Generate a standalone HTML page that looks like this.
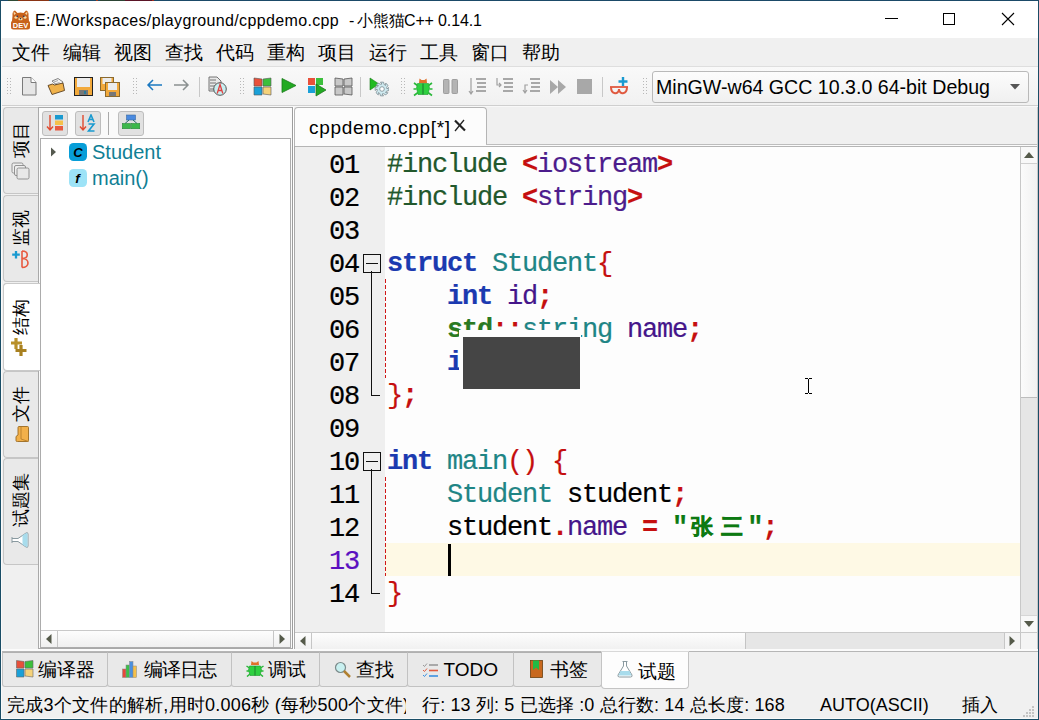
<!DOCTYPE html>
<html><head><meta charset="utf-8">
<style>
*{margin:0;padding:0;box-sizing:border-box}
html,body{width:1039px;height:720px;overflow:hidden;background:#f0f0f0;font-family:"Liberation Sans",sans-serif;color:#000}
.a{position:absolute}
.t{position:absolute;white-space:nowrap;line-height:1}
#win{position:absolute;left:0;top:0;width:1039px;height:720px;background:#f0f0f0;overflow:hidden}
.code{position:absolute;font-family:"Liberation Mono",monospace;font-size:27px;letter-spacing:-1.2px;line-height:33px;white-space:pre;-webkit-text-stroke:0.2px}
.kw{color:#1b3ab0;font-weight:bold}
.pp{color:#22582c}
.sy{color:#c50f0f;font-weight:bold}
.inc{color:#4c1c8c}
.ty{color:#1f8585}
.va{color:#45168a}
.br{color:#c50f0f}
.ns{color:#2a7a22;font-weight:bold}
.st{color:#0d7a12;font-weight:bold}
.cj{display:inline-block;width:30px;text-align:center;font-size:22px;letter-spacing:0;vertical-align:top;-webkit-text-stroke:0.6px #0d7a12}
.vt{position:absolute;transform-origin:0 0;transform:rotate(-90deg);white-space:nowrap;line-height:1;font-size:18px}
</style></head><body><div id="win">

<div class="a" style="left:0;top:0;width:1039px;height:1px;background:#1b4a68"></div>
<div class="a" style="left:8px;top:0;width:10px;height:1px;background:#2e4a34"></div>
<div class="a" style="left:18px;top:0;width:31px;height:1px;background:#8a3414"></div>
<div class="a" style="left:96px;top:0;width:2px;height:1px;background:#a03a1a"></div>
<div class="a" style="left:100px;top:0;width:25px;height:1px;background:#2c4434"></div>
<div class="a" style="left:125px;top:0;width:27px;height:1px;background:#5a1426"></div>
<div class="a" style="left:152px;top:0;width:2px;height:1px;background:#a02a1a"></div>
<div class="a" style="left:0;top:0;width:1px;height:720px;background:#1a4d66"></div>
<div class="a" style="left:1038px;top:0;width:1px;height:720px;background:#1a4d66"></div>
<div class="a" style="left:0;top:719px;width:1039px;height:1px;background:#1a4d66"></div>
<div class="a" style="left:1px;top:1px;width:1037px;height:37px;background:#fff"></div>
<svg class="a" style="left:10px;top:9px" width="21" height="21" viewBox="0 0 21 21">
<path d="M2.5 7 Q2 2 5 1.5 L7.5 4 Q10.5 2.8 13.5 4 L16 1.5 Q19 2 18.5 7 L19 12 H2 Z" fill="#c8621a"/>
<path d="M3.5 2.5 L6 4.5 L4 6 Z M17.5 2.5 L15 4.5 L17 6Z" fill="#f3d7a8"/>
<ellipse cx="6" cy="8.5" rx="1.6" ry="1.3" fill="#f5dca8"/><ellipse cx="15" cy="8.5" rx="1.6" ry="1.3" fill="#f5dca8"/>
<circle cx="7.3" cy="7.3" r="0.9" fill="#3a3a5a"/><circle cx="13.7" cy="7.3" r="0.9" fill="#3a3a5a"/>
<ellipse cx="10.5" cy="10" rx="2.2" ry="1.5" fill="#f5dca8"/><circle cx="10.5" cy="9.6" r="0.8" fill="#333"/>
<rect x="1" y="11.5" width="19" height="9" rx="2.5" fill="#c8621a"/>
<text x="10.5" y="19" font-family="Liberation Sans" font-weight="bold" font-size="7.5" fill="#fff" text-anchor="middle">DEV</text>
</svg>
<div class="t" style="left:35px;top:13px;font-size:16px;letter-spacing:0.35px">E:/Workspaces/playground/cppdemo.cpp</div>
<div class="t" style="left:349px;top:13px;font-size:16px">-</div>
<div class="t" style="left:357px;top:13px;font-size:16px">小熊猫</div>
<div class="t" style="left:404px;top:13px;font-size:16px;letter-spacing:-0.15px">C++ 0.14.1</div>
<div class="a" style="left:885px;top:18px;width:13px;height:1px;background:#000"></div>
<div class="a" style="left:943px;top:13px;width:12px;height:12px;border:1px solid #000"></div>
<svg class="a" style="left:1001px;top:12px" width="14" height="14" viewBox="0 0 14 14"><path d="M1 1 L13 13 M13 1 L1 13" stroke="#000" stroke-width="1.1"/></svg>
<div class="a" style="left:1px;top:38px;width:1037px;height:28px;background:#f0f0f0"></div>
<div class="t" style="left:11.5px;top:42.5px;font-size:19px">文件</div>
<div class="t" style="left:62.5px;top:42.5px;font-size:19px">编辑</div>
<div class="t" style="left:113.5px;top:42.5px;font-size:19px">视图</div>
<div class="t" style="left:164.5px;top:42.5px;font-size:19px">查找</div>
<div class="t" style="left:215.5px;top:42.5px;font-size:19px">代码</div>
<div class="t" style="left:266.5px;top:42.5px;font-size:19px">重构</div>
<div class="t" style="left:317.5px;top:42.5px;font-size:19px">项目</div>
<div class="t" style="left:368.5px;top:42.5px;font-size:19px">运行</div>
<div class="t" style="left:419.5px;top:42.5px;font-size:19px">工具</div>
<div class="t" style="left:470.5px;top:42.5px;font-size:19px">窗口</div>
<div class="t" style="left:521.5px;top:42.5px;font-size:19px">帮助</div>
<div class="a" style="left:1px;top:66px;width:1037px;height:1px;background:#dedede"></div>
<div class="a" style="left:1px;top:67px;width:1037px;height:38px;background:linear-gradient(#f9f9f9,#f1f1f1)"></div>
<div class="a" style="left:1px;top:105px;width:1037px;height:1px;background:#cfcfcf"></div>
<div class="a" style="left:7px;top:78px;width:1px;height:1px;background:#b8b8b8"></div><div class="a" style="left:10px;top:78px;width:1px;height:1px;background:#b8b8b8"></div><div class="a" style="left:7px;top:81px;width:1px;height:1px;background:#b8b8b8"></div><div class="a" style="left:10px;top:81px;width:1px;height:1px;background:#b8b8b8"></div><div class="a" style="left:7px;top:84px;width:1px;height:1px;background:#b8b8b8"></div><div class="a" style="left:10px;top:84px;width:1px;height:1px;background:#b8b8b8"></div><div class="a" style="left:7px;top:87px;width:1px;height:1px;background:#b8b8b8"></div><div class="a" style="left:10px;top:87px;width:1px;height:1px;background:#b8b8b8"></div><div class="a" style="left:7px;top:90px;width:1px;height:1px;background:#b8b8b8"></div><div class="a" style="left:10px;top:90px;width:1px;height:1px;background:#b8b8b8"></div><div class="a" style="left:7px;top:93px;width:1px;height:1px;background:#b8b8b8"></div><div class="a" style="left:10px;top:93px;width:1px;height:1px;background:#b8b8b8"></div>
<div class="a" style="left:133px;top:78px;width:1px;height:1px;background:#b8b8b8"></div><div class="a" style="left:136px;top:78px;width:1px;height:1px;background:#b8b8b8"></div><div class="a" style="left:133px;top:81px;width:1px;height:1px;background:#b8b8b8"></div><div class="a" style="left:136px;top:81px;width:1px;height:1px;background:#b8b8b8"></div><div class="a" style="left:133px;top:84px;width:1px;height:1px;background:#b8b8b8"></div><div class="a" style="left:136px;top:84px;width:1px;height:1px;background:#b8b8b8"></div><div class="a" style="left:133px;top:87px;width:1px;height:1px;background:#b8b8b8"></div><div class="a" style="left:136px;top:87px;width:1px;height:1px;background:#b8b8b8"></div><div class="a" style="left:133px;top:90px;width:1px;height:1px;background:#b8b8b8"></div><div class="a" style="left:136px;top:90px;width:1px;height:1px;background:#b8b8b8"></div><div class="a" style="left:133px;top:93px;width:1px;height:1px;background:#b8b8b8"></div><div class="a" style="left:136px;top:93px;width:1px;height:1px;background:#b8b8b8"></div>
<div class="a" style="left:240px;top:78px;width:1px;height:1px;background:#b8b8b8"></div><div class="a" style="left:243px;top:78px;width:1px;height:1px;background:#b8b8b8"></div><div class="a" style="left:240px;top:81px;width:1px;height:1px;background:#b8b8b8"></div><div class="a" style="left:243px;top:81px;width:1px;height:1px;background:#b8b8b8"></div><div class="a" style="left:240px;top:84px;width:1px;height:1px;background:#b8b8b8"></div><div class="a" style="left:243px;top:84px;width:1px;height:1px;background:#b8b8b8"></div><div class="a" style="left:240px;top:87px;width:1px;height:1px;background:#b8b8b8"></div><div class="a" style="left:243px;top:87px;width:1px;height:1px;background:#b8b8b8"></div><div class="a" style="left:240px;top:90px;width:1px;height:1px;background:#b8b8b8"></div><div class="a" style="left:243px;top:90px;width:1px;height:1px;background:#b8b8b8"></div><div class="a" style="left:240px;top:93px;width:1px;height:1px;background:#b8b8b8"></div><div class="a" style="left:243px;top:93px;width:1px;height:1px;background:#b8b8b8"></div>
<div class="a" style="left:401px;top:78px;width:1px;height:1px;background:#b8b8b8"></div><div class="a" style="left:404px;top:78px;width:1px;height:1px;background:#b8b8b8"></div><div class="a" style="left:401px;top:81px;width:1px;height:1px;background:#b8b8b8"></div><div class="a" style="left:404px;top:81px;width:1px;height:1px;background:#b8b8b8"></div><div class="a" style="left:401px;top:84px;width:1px;height:1px;background:#b8b8b8"></div><div class="a" style="left:404px;top:84px;width:1px;height:1px;background:#b8b8b8"></div><div class="a" style="left:401px;top:87px;width:1px;height:1px;background:#b8b8b8"></div><div class="a" style="left:404px;top:87px;width:1px;height:1px;background:#b8b8b8"></div><div class="a" style="left:401px;top:90px;width:1px;height:1px;background:#b8b8b8"></div><div class="a" style="left:404px;top:90px;width:1px;height:1px;background:#b8b8b8"></div><div class="a" style="left:401px;top:93px;width:1px;height:1px;background:#b8b8b8"></div><div class="a" style="left:404px;top:93px;width:1px;height:1px;background:#b8b8b8"></div>
<div class="a" style="left:643px;top:78px;width:1px;height:1px;background:#b8b8b8"></div><div class="a" style="left:646px;top:78px;width:1px;height:1px;background:#b8b8b8"></div><div class="a" style="left:643px;top:81px;width:1px;height:1px;background:#b8b8b8"></div><div class="a" style="left:646px;top:81px;width:1px;height:1px;background:#b8b8b8"></div><div class="a" style="left:643px;top:84px;width:1px;height:1px;background:#b8b8b8"></div><div class="a" style="left:646px;top:84px;width:1px;height:1px;background:#b8b8b8"></div><div class="a" style="left:643px;top:87px;width:1px;height:1px;background:#b8b8b8"></div><div class="a" style="left:646px;top:87px;width:1px;height:1px;background:#b8b8b8"></div><div class="a" style="left:643px;top:90px;width:1px;height:1px;background:#b8b8b8"></div><div class="a" style="left:646px;top:90px;width:1px;height:1px;background:#b8b8b8"></div><div class="a" style="left:643px;top:93px;width:1px;height:1px;background:#b8b8b8"></div><div class="a" style="left:646px;top:93px;width:1px;height:1px;background:#b8b8b8"></div>
<div class="a" style="left:199px;top:77px;width:1px;height:20px;background:#c8c8c8"></div>
<div class="a" style="left:360px;top:77px;width:1px;height:20px;background:#c8c8c8"></div>
<div class="a" style="left:602px;top:77px;width:1px;height:20px;background:#c8c8c8"></div>
<svg class="a" style="left:21px;top:77px" width="20" height="20" viewBox="0 0 20 20"><path d="M1.5 0.5 H10 L15 5.5 V18 H1.5 Z" fill="#e6e6e6" stroke="#7a7a7a"/><path d="M10 0.5 V5.5 H15" fill="#fff" stroke="#7a7a7a"/></svg>
<svg class="a" style="left:47px;top:77px" width="20" height="20" viewBox="0 0 20 20"><path d="M5 4 L11 1.5 L16 5 L13 11 Z" fill="#f4f4f4" stroke="#666" stroke-width="0.8"/><path d="M7 5 L11 3.5 M8 7 L12.5 5.5" stroke="#888" stroke-width="0.7"/><path d="M1 8.5 L5.5 7 L7.5 8 L16 6 L17.5 13.5 L5 17.5 Z" fill="#f0b24a" stroke="#5a4020" stroke-width="0.9"/></svg>
<svg class="a" style="left:74px;top:77px" width="20" height="20" viewBox="0 0 20 20"><rect x="0.5" y="0.5" width="18" height="18" fill="#f2a93b" stroke="#222"/><rect x="3" y="1" width="13" height="9" fill="#ececec"/><rect x="5" y="13" width="9" height="5" fill="#777"/><rect x="10" y="14" width="2" height="3" fill="#2a7a9a"/></svg>
<svg class="a" style="left:100px;top:77px" width="20" height="20" viewBox="0 0 20 20"><rect x="0.5" y="0.5" width="13" height="13" fill="#f2a93b" stroke="#8a6a30"/><rect x="2.5" y="1" width="9" height="6" fill="#ececec"/><rect x="5.5" y="5.5" width="14" height="14" fill="#f2a93b" stroke="#8a6a30"/><rect x="8" y="6" width="9" height="7" fill="#ececec"/><rect x="9" y="15" width="7" height="4" fill="#777"/></svg>
<svg class="a" style="left:146px;top:75px" width="20" height="20" viewBox="0 0 20 20"><path d="M2 10 H16 M7 5 L2 10 L7 15" fill="none" stroke="#1a78c0" stroke-width="1.5"/></svg>
<svg class="a" style="left:173px;top:75px" width="20" height="20" viewBox="0 0 20 20"><path d="M1 10 H15 M10 5 L15 10 L10 15" fill="none" stroke="#8a9090" stroke-width="1.5"/></svg>
<svg class="a" style="left:207px;top:76px" width="20" height="20" viewBox="0 0 20 20"><path d="M2 1 H10 L14 5 V15 H2 Z" fill="#e8e8e8" stroke="#666" stroke-width="0.9"/><path d="M3 4H9M3 7H9M3 10H8M3 13H8" stroke="#666" stroke-width="0.9"/><circle cx="13" cy="13" r="6.3" fill="#c8eef0" stroke="#555" stroke-width="1"/><path d="M10.2 17.5 L13 8.5 L15.8 17.5 M11 14.5 H15" fill="none" stroke="#e04040" stroke-width="1.3"/></svg>
<svg class="a" style="left:253px;top:77px" width="20" height="20" viewBox="0 0 20 20"><path d="M1 1 L9 2 L9 9 L1 9 Z" fill="#e8503a" stroke="#555" stroke-width="0.6"/><path d="M10 2 L18 1 L18 9 L10 9 Z" fill="#3cbf3c" stroke="#555" stroke-width="0.6"/><path d="M1 10 L9 10 L9 18 L1 18 Z" fill="#1aa0d8" stroke="#555" stroke-width="0.6"/><path d="M10 10 L18 10 L18 18 L10 17 Z" fill="#f5d27a" stroke="#555" stroke-width="0.6"/></svg>
<svg class="a" style="left:280px;top:77px" width="20" height="20" viewBox="0 0 20 20"><path d="M2 1.5 L16 8.5 L2 15.5 Z" fill="#22aa22" stroke="#1a7a1a" stroke-width="0.8"/></svg>
<svg class="a" style="left:307px;top:77px" width="20" height="20" viewBox="0 0 20 20"><path d="M1 1 L8 1 L8 8 L1 8 Z" fill="#e8503a"/><path d="M9 1 L16 1 L16 8 L9 8 Z" fill="#3cbf3c"/><path d="M1 9 L8 9 L8 16 L1 16 Z" fill="#1aa0d8"/><path d="M9 9 L12 9 L12 16 L9 16Z" fill="#f5d27a"/><path d="M9 7 L19 13 L9 19 Z" fill="#22aa22" stroke="#1a6a1a" stroke-width="0.7"/></svg>
<svg class="a" style="left:334px;top:77px" width="20" height="20" viewBox="0 0 20 20"><path d="M1 1 L9 2 L9 9 L1 9 Z M10 2 L18 1 L18 9 L10 9 Z M1 10 L9 10 L9 18 L1 18 Z M10 10 L18 10 L18 18 L10 17 Z" fill="#c8c8c8" stroke="#555" stroke-width="0.8"/></svg>
<svg class="a" style="left:369px;top:77px" width="20" height="20" viewBox="0 0 20 20"><path d="M1 1 L10 7 L1 13 Z" fill="#22bb22" stroke="#1a7a1a" stroke-width="0.6"/><path d="M19.83 10.47 L19.83 13.53 L17.50 14.17 L16.55 15.52 L18.91 15.75 L16.75 17.91 L14.65 16.72 L13.03 17.00 L14.53 18.83 L11.47 18.83 L10.83 16.50 L9.48 15.55 L9.25 17.91 L7.09 15.75 L8.28 13.65 L8.00 12.03 L6.17 13.53 L6.17 10.47 L8.50 9.83 L9.45 8.48 L7.09 8.25 L9.25 6.09 L11.35 7.28 L12.97 7.00 L11.47 5.17 L14.53 5.17 L15.17 7.50 L16.52 8.45 L16.75 6.09 L18.91 8.25 L17.72 10.35 L18.00 11.97Z" fill="#cfeaf0" stroke="#7a8a90" stroke-width="0.8"/><circle cx="13" cy="12" r="2.3" fill="#fff" stroke="#7a8a90" stroke-width="0.8"/></svg>
<svg class="a" style="left:413px;top:77px" width="20" height="20" viewBox="0 0 20 20"><path d="M6 6 L6.5 1.5 L8.5 3 H11.5 L13.5 1.5 L14 6 Z" fill="#e0702a"/><path d="M4.5 6.5 H15.5 L16.5 11 L15 17.5 H5 L3.5 11 Z" fill="#2ed040" stroke="#1a9a2a" stroke-width="0.6"/><path d="M10 6.5 V17.5" stroke="#1a6a2a" stroke-width="0.9"/><path d="M1 6 L4.5 8.5 M19 6 L15.5 8.5 M0.5 12 H3.5 M19.5 12 H16.5 M1 18.5 L5 15.5 M19 18.5 L15 15.5" stroke="#2ab83a" stroke-width="1.6"/></svg>
<svg class="a" style="left:442px;top:77px" width="20" height="20" viewBox="0 0 20 20"><rect x="1.5" y="2.5" width="5.5" height="14" rx="0.8" fill="#b4b4b4" stroke="#989898" stroke-width="0.9"/><rect x="10" y="2.5" width="5.5" height="14" rx="0.8" fill="#b4b4b4" stroke="#989898" stroke-width="0.9"/></svg>
<svg class="a" style="left:468px;top:77px" width="20" height="20" viewBox="0 0 20 20"><path d="M8 2 H18 M9 6 H18 M9 10 H18 M8 14 H18" stroke="#a8a8a8" stroke-width="1.8"/><path d="M3 1 V17 M1 14 L3 17 L5 14" stroke="#a0a0a0" stroke-width="1.2" fill="none"/></svg>
<svg class="a" style="left:495px;top:77px" width="20" height="20" viewBox="0 0 20 20"><path d="M8 2 H18 M9 6 H18 M9 10 H18 M8 14 H18" stroke="#a8a8a8" stroke-width="1.8"/><path d="M2 1 V8 H6 M4 6 L6 8 L4 10" stroke="#a0a0a0" stroke-width="1.2" fill="none"/></svg>
<svg class="a" style="left:522px;top:77px" width="20" height="20" viewBox="0 0 20 20"><path d="M8 2 H18 M9 6 H18 M9 10 H18 M8 14 H18" stroke="#a8a8a8" stroke-width="1.8"/><path d="M6 8 H3 V16 M1 13 L3 16 L5 13" stroke="#a0a0a0" stroke-width="1.2" fill="none"/></svg>
<svg class="a" style="left:549px;top:77px" width="20" height="20" viewBox="0 0 20 20"><path d="M1 3 L9 10 L1 17 Z M9 3 L17 10 L9 17 Z" fill="#a8a8a8"/></svg>
<svg class="a" style="left:577px;top:79px" width="20" height="20" viewBox="0 0 20 20"><rect x="0" y="0" width="15" height="15" fill="#a8a8a8"/></svg>
<svg class="a" style="left:609px;top:76px" width="21" height="21" viewBox="0 0 21 21"><path d="M14 1 V10 M9.5 5.5 H18.5" stroke="#1a9ad0" stroke-width="2.4"/><path d="M1 11 H19" stroke="#e05a40" stroke-width="1.8"/><path d="M2 11 C2 19 10 19 10 13 C10 19 18 19 18 11" fill="none" stroke="#e05a40" stroke-width="2"/></svg>
<div class="a" style="left:652px;top:71px;width:377px;height:32px;border:1px solid #b9b9b9;border-radius:3px;background:linear-gradient(#fcfcfc,#f0f0f0)"></div>
<div class="t" style="left:656px;top:78px;font-size:19.6px">MinGW-w64 GCC 10.3.0 64-bit Debug</div>
<svg class="a" style="left:1010px;top:84px" width="10" height="6" viewBox="0 0 10 6"><path d="M0 0 H10 L5 5.5 Z" fill="#555"/></svg>
<div class="a" style="left:1px;top:106px;width:1037px;height:1px;background:#f8f8f8"></div>
<div class="a" style="left:3px;top:107px;width:36px;height:87px;background:#e9e9e9;border:1px solid #c6c6c6;border-right:none;border-radius:4px 0 0 4px"></div>
<div class="a" style="left:3px;top:195px;width:36px;height:87px;background:#e9e9e9;border:1px solid #c6c6c6;border-right:none;border-radius:4px 0 0 4px"></div>
<div class="a" style="left:3px;top:283px;width:37px;height:88px;background:#fff;border:1px solid #c9c9c9;border-right:none;border-radius:4px 0 0 4px"></div>
<div class="a" style="left:3px;top:371px;width:36px;height:87px;background:#e9e9e9;border:1px solid #c6c6c6;border-right:none;border-radius:4px 0 0 4px"></div>
<div class="a" style="left:3px;top:458px;width:36px;height:107px;background:#e9e9e9;border:1px solid #c6c6c6;border-right:none;border-radius:4px 0 0 4px"></div>
<div class="vt" style="left:12px;top:158px">项目</div>
<div class="vt" style="left:12px;top:245.5px">监视</div>
<div class="vt" style="left:12px;top:334.5px">结构</div>
<div class="vt" style="left:12px;top:422px">文件</div>
<div class="vt" style="left:12px;top:527px">试题集</div>
<svg class="a" style="left:11px;top:162px" width="19" height="19" viewBox="0 0 19 19"><rect x="1" y="1" width="11" height="10" rx="1.5" fill="#eee" stroke="#888" stroke-width="0.9"/><rect x="3.5" y="3.5" width="11" height="10" rx="1.5" fill="#eee" stroke="#888" stroke-width="0.9"/><rect x="6" y="6" width="12" height="11" rx="1.5" fill="#e8e8e8" stroke="#888" stroke-width="0.9"/></svg>
<svg class="a" style="left:11px;top:250px" width="19" height="20" viewBox="0 0 19 20"><path d="M5 1 V8.5 M1.2 4.7 H8.8" stroke="#1a9ad0" stroke-width="2.3"/><path d="M11 1 V17.5 M11 1 C18 1 18 8.5 11 8.5 C19 8.5 19 17.5 11 17.5" fill="none" stroke="#e85a40" stroke-width="1.6"/></svg>
<svg class="a" style="left:11px;top:337px" width="17" height="20" viewBox="0 0 17 20"><path d="M5 1 V12 M0 6 H11" stroke="#b8902a" stroke-width="3.2"/><path d="M10 8 V19 M4.5 13.5 H15.5" stroke="#a88020" stroke-width="3.2"/></svg>
<svg class="a" style="left:13px;top:425px" width="18" height="18" viewBox="0 0 18 18"><g transform="rotate(-90 9 9)"><path d="M1.5 4.5 L1.5 14.5 Q1.5 15.5 2.5 15.5 L15.5 15.5 Q16.5 15.5 16.5 14.5 L16.5 6 Q16.5 5 15.5 5 L8 5 L6.5 3 L2.5 3 Q1.5 3 1.5 4 Z" fill="#f2b04a" stroke="#9a6a20" stroke-width="0.9"/><path d="M1.5 15.5 L4 8 L16.5 8" fill="none" stroke="#b07a28" stroke-width="0.8"/></g></svg>
<svg class="a" style="left:11px;top:531px" width="18" height="18" viewBox="0 0 18 18"><g transform="rotate(-90 9 9)"><path d="M6 1 H12 M7.5 1 V7 L2 15 Q1 17 3 17 H15 Q17 17 16 15 L10.5 7 V1" fill="#fff" stroke="#8a9aa0" stroke-width="1"/><path d="M4.2 11.5 L13.8 11.5 L16 15.5 Q16.5 16.5 15 16.5 H3 Q1.5 16.5 2 15.5 Z" fill="#a8dcec"/></g></svg>
<div class="a" style="left:38px;top:107px;width:255px;height:542px;background:#fafafa;border:1px solid #a9a9a9;border-right:1px solid #9d9d9d"></div>
<div class="a" style="left:3px;top:283px;width:37px;height:88px;background:#fff;border:1px solid #c9c9c9;border-right:none;border-radius:4px 0 0 4px"></div>
<div class="vt" style="left:12px;top:334.5px">结构</div>
<svg class="a" style="left:11px;top:337px" width="17" height="20" viewBox="0 0 17 20"><path d="M5 1 V12 M0 6 H11" stroke="#b8902a" stroke-width="3.2"/><path d="M10 8 V19 M4.5 13.5 H15.5" stroke="#a88020" stroke-width="3.2"/></svg>
<div class="a" style="left:42px;top:111px;width:26px;height:25px;background:#e1e1e1;border:1px solid #bdbdbd;border-radius:3px"></div>
<div class="a" style="left:75px;top:111px;width:26px;height:25px;background:#e1e1e1;border:1px solid #bdbdbd;border-radius:3px"></div>
<div class="a" style="left:118px;top:111px;width:26px;height:25px;background:#e1e1e1;border:1px solid #bdbdbd;border-radius:3px"></div>
<div class="a" style="left:108px;top:112px;width:1px;height:23px;background:#aaa"></div>
<svg class="a" style="left:46px;top:114px" width="18" height="18" viewBox="0 0 18 18"><path d="M4 1 V16 M1 12.5 L4 16 L7 12.5" stroke="#e04a30" stroke-width="1.4" fill="none"/><rect x="9" y="1" width="8" height="4.5" fill="#1a9ad0"/><rect x="9" y="6.5" width="8" height="4.5" fill="#f5c04a"/><rect x="9" y="12" width="8" height="4.5" fill="#e85a40"/></svg>
<svg class="a" style="left:79px;top:114px" width="18" height="18" viewBox="0 0 18 18"><path d="M4 1 V16 M1 12.5 L4 16 L7 12.5" stroke="#e04a30" stroke-width="1.4" fill="none"/><path d="M9 8 L12 1 L15 8 M10 5.5 H14 M9.5 10 H15 L9.5 17 H15.5" stroke="#1a9ad0" stroke-width="1.6" fill="none"/></svg>
<svg class="a" style="left:122px;top:114px" width="18" height="18" viewBox="0 0 18 18"><rect x="4.5" y="1" width="9" height="5" fill="#4a8ae0" stroke="#3a6aa0" stroke-width="0.6"/><path d="M7 6 L3 9.5 M11 6 L15 9.5" stroke="#2a6a6a" stroke-width="1"/><rect x="0.3" y="9.5" width="8.2" height="5.2" fill="#3cb84a" stroke="#2a8a3a" stroke-width="0.6"/><rect x="9.5" y="9.5" width="8.2" height="5.2" fill="#3cb84a" stroke="#2a8a3a" stroke-width="0.6"/></svg>
<div class="a" style="left:40px;top:138px;width:251px;height:510px;background:#fff;border:1px solid #acacac"></div>
<svg class="a" style="left:50px;top:147px" width="8" height="11" viewBox="0 0 8 11"><path d="M1 0.5 L6 5 L1 9.5 Z" fill="#555a50"/></svg>
<svg class="a" style="left:69px;top:143px" width="18" height="18" viewBox="0 0 18 18"><rect x="0" y="0" width="18" height="18" rx="4.5" fill="#079ed8"/><text x="9" y="13.5" font-family="Liberation Sans" font-weight="bold" font-style="italic" font-size="13" text-anchor="middle" fill="#000">C</text></svg>
<svg class="a" style="left:69px;top:169px" width="18" height="18" viewBox="0 0 18 18"><rect x="0" y="0" width="18" height="18" rx="4.5" fill="#9de3f7"/><text x="8.5" y="14" font-family="Liberation Sans" font-weight="bold" font-style="italic" font-size="13.5" text-anchor="middle" fill="#000">f</text></svg>
<div class="t" style="left:92px;top:142px;font-size:20px;color:#117f95">Student</div>
<div class="t" style="left:92px;top:168px;font-size:20px;color:#117f95">main()</div>
<div class="a" style="left:41px;top:630px;width:249px;height:1px;background:#c9c9c9"></div>
<div class="a" style="left:41px;top:631px;width:249px;height:16px;background:linear-gradient(#fdfdfd,#f0f0f0)"></div>
<div class="a" style="left:57px;top:631px;width:1px;height:16px;background:#c6c6c6"></div>
<div class="a" style="left:273px;top:631px;width:1px;height:16px;background:#c6c6c6"></div>
<svg class="a" style="left:46px;top:634px" width="6" height="10" viewBox="0 0 6 10"><path d="M5.5 0 V10 L0 5 Z" fill="#555a4a"/></svg>
<svg class="a" style="left:279px;top:634px" width="6" height="10" viewBox="0 0 6 10"><path d="M0.5 0 V10 L6 5 Z" fill="#555a4a"/></svg>
<div class="a" style="left:294px;top:107px;width:193px;height:40px;background:#fcfcfc;border:1px solid #b5b5b5;border-bottom:none;border-radius:4px 4px 0 0"></div>
<div class="t" style="left:309px;top:118px;font-size:19px;letter-spacing:0.7px">cppdemo.cpp[*]</div>
<svg class="a" style="left:453px;top:119px" width="14" height="13" viewBox="0 0 14 13"><path d="M2 1.5 L12 11.5" stroke="#222" stroke-width="2.2"/><path d="M11 1 L2 12" stroke="#222" stroke-width="1.3"/></svg>
<div class="a" style="left:486px;top:144px;width:551px;height:1px;background:#bdbdbd"></div>
<div class="a" style="left:486px;top:145px;width:551px;height:1px;background:#fbfbfb"></div>
<div class="a" style="left:294px;top:146px;width:743px;height:1px;background:#b5b5b5"></div>
<div class="a" style="left:294px;top:146px;width:1px;height:503px;background:#a9a9a9"></div>
<div class="a" style="left:295px;top:147px;width:90px;height:485px;background:#efefef"></div>
<div class="a" style="left:385px;top:147px;width:635px;height:485px;background:#fdfdfd"></div>
<div class="a" style="left:385px;top:543px;width:635px;height:33px;background:#fef9e5"></div>
<div class="code" style="left:387px;top:149px"><span class="pp">#include </span><span class="sy">&lt;</span><span class="inc">iostream</span><span class="sy">&gt;</span>
<span class="pp">#include </span><span class="sy">&lt;</span><span class="inc">string</span><span class="sy">&gt;</span>

<span class="kw">struct</span> <span class="ty">Student</span><span class="br">{</span>
    <span class="kw">int</span> <span class="va">id</span><span class="sy">;</span>
    <span class="ns">std</span><span class="sy">::</span><span class="ty">string</span> <span class="va">name</span><span class="sy">;</span>
    <span class="kw">int</span> <span class="va">age</span><span class="sy">;</span>
<span class="br">}</span><span class="sy">;</span>

<span class="kw">int</span> <span class="ty">main</span><span class="br">()</span> <span class="br">{</span>
    <span class="ty">Student</span> student<span class="sy">;</span>
    student<span class="sy">.</span><span class="va">name</span> <span class="sy">=</span> <span class="st">"<span class="cj">张</span><span class="cj">三</span>"</span><span class="sy">;</span>

<span class="br">}</span></div>
<div class="code" style="left:329px;top:150px"><div style="height:33px;">01</div><div style="height:33px;">02</div><div style="height:33px;">03</div><div style="height:33px;">04</div><div style="height:33px;">05</div><div style="height:33px;">06</div><div style="height:33px;">07</div><div style="height:33px;">08</div><div style="height:33px;">09</div><div style="height:33px;">10</div><div style="height:33px;">11</div><div style="height:33px;">12</div><div style="height:33px;color:#5a10c0">13</div><div style="height:33px;">14</div></div>
<div class="a" style="left:363px;top:254px;width:18px;height:19px;border:1px solid #111;background:#efefef"></div>
<div class="a" style="left:366px;top:263px;width:12px;height:1px;background:#111"></div>
<div class="a" style="left:363px;top:452px;width:18px;height:19px;border:1px solid #111;background:#efefef"></div>
<div class="a" style="left:366px;top:461px;width:12px;height:1px;background:#111"></div>
<div class="a" style="left:371px;top:271px;width:1px;height:124px;background:#111"></div>
<div class="a" style="left:371px;top:395px;width:9px;height:1px;background:#111"></div>
<div class="a" style="left:371px;top:469px;width:1px;height:124px;background:#111"></div>
<div class="a" style="left:371px;top:593px;width:9px;height:1px;background:#111"></div>
<div class="a" style="left:385px;top:279px;width:1px;height:99px;background:repeating-linear-gradient(#d01818 0 4px,transparent 4px 6px)"></div>
<div class="a" style="left:385px;top:477px;width:1px;height:99px;background:repeating-linear-gradient(#d01818 0 4px,transparent 4px 6px)"></div>
<div class="a" style="left:448px;top:544px;width:3px;height:32px;background:#000"></div>
<div class="a" style="left:459px;top:330px;width:122px;height:7px;background:#fdfdfd"></div>
<div class="a" style="left:459px;top:337px;width:4px;height:52px;background:#fdfdfd"></div>
<div class="a" style="left:463px;top:337px;width:117px;height:52px;background:#454545"></div>
<div class="a" style="left:805px;top:378px;width:3px;height:1px;background:#000"></div><div class="a" style="left:809px;top:378px;width:3px;height:1px;background:#000"></div><div class="a" style="left:808px;top:379px;width:1px;height:14px;background:#000"></div><div class="a" style="left:805px;top:393px;width:3px;height:1px;background:#000"></div><div class="a" style="left:809px;top:393px;width:3px;height:1px;background:#000"></div>
<div class="a" style="left:1020px;top:147px;width:17px;height:485px;background:#e6e6e6;border-left:1px solid #c8c8c8"></div>
<div class="a" style="left:1021px;top:164px;width:16px;height:234px;background:linear-gradient(90deg,#fbfbfb,#f1f1f1);border-bottom:1px solid #bdbdbd"></div>
<div class="a" style="left:1021px;top:147px;width:16px;height:17px;background:#f8f8f8;border-bottom:1px solid #d0d0d0"></div>
<div class="a" style="left:1021px;top:615px;width:16px;height:17px;background:#f8f8f8;border-top:1px solid #d6d6d6"></div>
<svg class="a" style="left:1024px;top:152px" width="10" height="6" viewBox="0 0 10 6"><path d="M0 6 H10 L5 0 Z" fill="#555a4a"/></svg>
<svg class="a" style="left:1024px;top:621px" width="10" height="6" viewBox="0 0 10 6"><path d="M0 0 H10 L5 6 Z" fill="#555a4a"/></svg>
<div class="a" style="left:1037px;top:107px;width:1px;height:544px;background:#c8c8c8"></div>
<div class="a" style="left:295px;top:632px;width:742px;height:1px;background:#c9c9c9"></div>
<div class="a" style="left:295px;top:633px;width:742px;height:16px;background:#e6e6e6"></div>
<div class="a" style="left:295px;top:633px;width:450px;height:16px;background:linear-gradient(#fdfdfd,#f1f1f1)"></div>
<div class="a" style="left:311px;top:633px;width:1px;height:16px;background:#c6c6c6"></div>
<div class="a" style="left:745px;top:633px;width:1px;height:16px;background:#c4c4c4"></div>
<div class="a" style="left:1004px;top:633px;width:33px;height:16px;background:#f4f4f4"></div>
<div class="a" style="left:1004px;top:633px;width:1px;height:16px;background:#c6c6c6"></div>
<div class="a" style="left:1020px;top:633px;width:1px;height:16px;background:#c6c6c6"></div>
<svg class="a" style="left:300px;top:636px" width="6" height="10" viewBox="0 0 6 10"><path d="M5.5 0 V10 L0 5 Z" fill="#555a4a"/></svg>
<svg class="a" style="left:1009px;top:636px" width="6" height="10" viewBox="0 0 6 10"><path d="M0.5 0 V10 L6 5 Z" fill="#555a4a"/></svg>
<div class="a" style="left:293px;top:107px;width:1px;height:542px;background:#fff"></div>
<div class="a" style="left:1px;top:649px;width:1037px;height:2px;background:#fbfbfb"></div>
<div class="a" style="left:1px;top:651px;width:1037px;height:1px;background:#b6b6b6"></div>
<div class="a" style="left:2px;top:652px;width:106px;height:35px;background:#e9e9e9;border:1px solid #c2c2c2;border-top:1px solid #b0b0b0;border-radius:0 0 3px 3px"></div>
<div class="t" style="left:37.5px;top:660px;font-size:19px;letter-spacing:0">编译器</div>
<div class="a" style="left:107px;top:652px;width:125px;height:35px;background:#e9e9e9;border:1px solid #c2c2c2;border-top:1px solid #b0b0b0;border-radius:0 0 3px 3px"></div>
<div class="t" style="left:143.5px;top:660px;font-size:19px;letter-spacing:-0.7px">编译日志</div>
<div class="a" style="left:231px;top:652px;width:89px;height:35px;background:#e9e9e9;border:1px solid #c2c2c2;border-top:1px solid #b0b0b0;border-radius:0 0 3px 3px"></div>
<div class="t" style="left:267.5px;top:660px;font-size:19px;letter-spacing:0">调试</div>
<div class="a" style="left:319px;top:652px;width:89px;height:35px;background:#e9e9e9;border:1px solid #c2c2c2;border-top:1px solid #b0b0b0;border-radius:0 0 3px 3px"></div>
<div class="t" style="left:355.5px;top:660px;font-size:19px;letter-spacing:0">查找</div>
<div class="a" style="left:407px;top:652px;width:107px;height:35px;background:#e9e9e9;border:1px solid #c2c2c2;border-top:1px solid #b0b0b0;border-radius:0 0 3px 3px"></div>
<div class="t" style="left:443.5px;top:660px;font-size:19px;letter-spacing:0">TODO</div>
<div class="a" style="left:513px;top:652px;width:89px;height:35px;background:#e9e9e9;border:1px solid #c2c2c2;border-top:1px solid #b0b0b0;border-radius:0 0 3px 3px"></div>
<div class="t" style="left:549.5px;top:660px;font-size:19px;letter-spacing:0">书签</div>
<div class="a" style="left:601px;top:651px;width:88px;height:1px;background:#d8d8d8"></div>
<div class="a" style="left:601px;top:652px;width:88px;height:37px;background:#fdfdfd;border:1px solid #c4c4c4;border-top:none;border-radius:0 0 4px 4px"></div>
<div class="t" style="left:637.5px;top:662px;font-size:19px;letter-spacing:0">试题</div>
<svg class="a" style="left:16px;top:660px" width="18" height="18" viewBox="0 0 18 18"><path d="M0.5 0.5 L8 1.5 L8 8 L0.5 8 Z" fill="#e8503a" stroke="#666" stroke-width="0.6"/><path d="M9 1.5 L17 0.5 L17 8 L9 8 Z" fill="#3cbf3c" stroke="#666" stroke-width="0.6"/><path d="M0.5 9 L8 9 L8 17 L0.5 17 Z" fill="#1aa0d8" stroke="#666" stroke-width="0.6"/><path d="M9 9 L17 9 L17 17 L9 16 Z" fill="#f5d27a" stroke="#666" stroke-width="0.6"/></svg>
<svg class="a" style="left:122px;top:661px" width="16" height="17" viewBox="0 0 16 17"><rect x="0.5" y="8" width="3.5" height="8.5" fill="#e8483a" stroke="#888" stroke-width="0.5"/><rect x="4" y="4" width="3.5" height="12.5" fill="#3cbf4a" stroke="#888" stroke-width="0.5"/><rect x="7.5" y="0.5" width="3.5" height="16" fill="#4a90e0" stroke="#888" stroke-width="0.5"/><rect x="11" y="5" width="3.5" height="11.5" fill="#f5c04a" stroke="#888" stroke-width="0.5"/></svg>
<svg class="a" style="left:246px;top:660px" width="18" height="17" viewBox="0 0 18 17"><path d="M5 5 L5.5 1 L7.5 2.5 H10.5 L12.5 1 L13 5 Z" fill="#e0702a"/><path d="M3.5 6 H14.5 L15.5 10 L14 15.5 H4 L2.5 10 Z" fill="#2ed040" stroke="#1a9a2a" stroke-width="0.6"/><path d="M9 6 V15.5" stroke="#1a6a2a" stroke-width="0.8"/><path d="M0.5 6 L3.5 8 M17.5 6 L14.5 8 M0.5 11 H3 M17.5 11 H15 M1 16.5 L4 14 M17 16.5 L14 14" stroke="#2ab83a" stroke-width="1.5"/></svg>
<svg class="a" style="left:334px;top:661px" width="17" height="17" viewBox="0 0 17 17"><circle cx="6.5" cy="6.5" r="5" fill="#c8f0f0" stroke="#7a8a8a" stroke-width="1.2"/><path d="M10 10 L16 16" stroke="#b08030" stroke-width="2.5"/></svg>
<svg class="a" style="left:422px;top:662px" width="17" height="16" viewBox="0 0 17 16"><path d="M1 3 L2.5 4.5 L5 1.5" stroke="#999" fill="none"/><path d="M1 8 L2.5 9.5 L5 6.5" stroke="#e05a40" fill="none"/><path d="M1 13 L2.5 14.5 L5 11.5" stroke="#3a90e0" fill="none"/><path d="M7 3 H16" stroke="#999" stroke-width="1.6"/><path d="M7 8.5 H16" stroke="#e05a40" stroke-width="1.6"/><path d="M7 14 H16" stroke="#3a90e0" stroke-width="1.6"/></svg>
<svg class="a" style="left:530px;top:660px" width="13" height="18" viewBox="0 0 13 18"><rect x="0.5" y="0.5" width="12" height="17" fill="#c8681e" stroke="#6a4010" stroke-width="0.8"/><path d="M3 0.5 V10 L6 7.5 L9 10 V0.5 Z" fill="#22bb44"/></svg>
<svg class="a" style="left:617px;top:661px" width="16" height="17" viewBox="0 0 16 17"><path d="M5.5 0.5 H10.5 M6.5 0.5 V5 L1 14 Q0.5 16 2.5 16 H13.5 Q15.5 16 15 14 L9.5 5 V0.5" fill="#fff" stroke="#8a9aa0" stroke-width="1"/><path d="M3.5 10 L12.5 10 L14.5 14.5 H1.5 Z" fill="#a8dcec"/></svg>
<div class="t" style="left:7px;top:696px;font-size:18px;width:399px;overflow:hidden;letter-spacing:0.25px">完成3个文件的解析,用时0.006秒 (每秒500个文件)</div>
<div class="t" style="left:422px;top:696px;font-size:18px;letter-spacing:0.14px">行: 13 列: 5 已选择 :0 总行数: 14 总长度: 168</div>
<div class="t" style="left:820px;top:696px;font-size:18px">AUTO(ASCII)</div>
<div class="t" style="left:962px;top:696px;font-size:18px">插入</div>
<div class="a" style="left:1032px;top:706px;width:2px;height:2px;background:#c4c4c4"></div>
<div class="a" style="left:1029px;top:709px;width:2px;height:2px;background:#c4c4c4"></div>
<div class="a" style="left:1032px;top:709px;width:2px;height:2px;background:#c4c4c4"></div>
<div class="a" style="left:1026px;top:712px;width:2px;height:2px;background:#c4c4c4"></div>
<div class="a" style="left:1029px;top:712px;width:2px;height:2px;background:#c4c4c4"></div>
<div class="a" style="left:1032px;top:712px;width:2px;height:2px;background:#c4c4c4"></div>
<div class="a" style="left:1023px;top:715px;width:2px;height:2px;background:#c4c4c4"></div>
<div class="a" style="left:1026px;top:715px;width:2px;height:2px;background:#c4c4c4"></div>
<div class="a" style="left:1029px;top:715px;width:2px;height:2px;background:#c4c4c4"></div>
<div class="a" style="left:1032px;top:715px;width:2px;height:2px;background:#c4c4c4"></div>
<div class="a" style="left:1px;top:718px;width:1037px;height:1px;background:#fafafa"></div>
<div class="a" style="left:1px;top:38px;width:1px;height:681px;background:#fafafa"></div>
</div></body></html>
